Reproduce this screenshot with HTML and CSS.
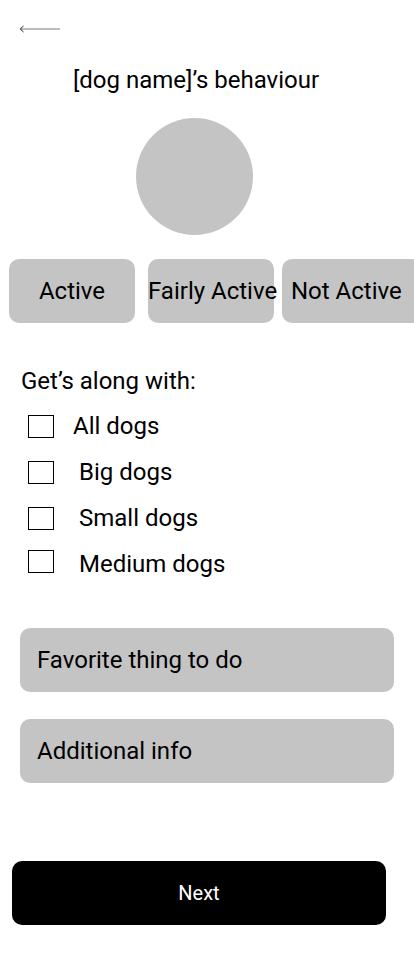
FILE: index.html
```html
<!DOCTYPE html>
<html lang="en">
<head>
<meta charset="utf-8">
<title>Behaviour</title>
<link rel="stylesheet" href="styles.css">
</head>
<body>
<div class="screen">
  <header class="top">
    <svg class="back" width="42" height="8" viewBox="0 0 42 8" aria-hidden="true">
      <line x1="2" y1="4" x2="41" y2="4" stroke="#7a7a7a" stroke-width="1.2"/>
      <path d="M4.5 1 L1.2 4 L4.5 7" fill="none" stroke="#222" stroke-width="1"/>
    </svg>
  </header>
  <h1 class="title">[dog name]’s behaviour</h1>
  <div class="avatar"></div>
  <div class="levels">
    <div class="level l1">Active</div>
    <div class="level l2">Fairly Active</div>
    <div class="level l3">Not Active</div>
  </div>
  <p class="along">Get’s along with:</p>
  <ul class="checks">
    <li class="check c1"><span class="box"></span><span class="lbl">All dogs</span></li>
    <li class="check c2"><span class="box"></span><span class="lbl">Big dogs</span></li>
    <li class="check c3"><span class="box"></span><span class="lbl">Small dogs</span></li>
    <li class="check c4"><span class="box"></span><span class="lbl">Medium dogs</span></li>
  </ul>
  <div class="field f1">Favorite thing to do</div>
  <div class="field f2">Additional info</div>
  <div class="next">Next</div>
</div>
</body>
</html>
```
FILE: styles.css
```css
* { box-sizing: border-box; }
html, body { margin: 0; padding: 0; background: #fff; }
body { font-family: Roboto, "Noto Sans", sans-serif; color: #000; overflow: hidden; }
.screen { width: 414px; height: 974px; display: flex; flex-direction: column; }
.top { height: 58px; padding: 25px 0 0 19px; }
.back { display: block; }
.title { margin: 8px 0 0; font-size: 24px; font-weight: 400; text-align: center; padding-right: 22px; line-height: 28px; height: 28px; }
.avatar { width: 117px; height: 117px; border-radius: 50%; background: #c4c4c4; margin: 24px 0 0 136px; }
.levels { display: flex; margin: 24px 0 0 9px; height: 64px; }
.level { flex: 0 0 126px; min-width: 0; height: 64px; background: #c4c4c4; border-radius: 10px; display: flex; align-items: center; justify-content: center; font-size: 24px; white-space: nowrap; }
.l2 { margin-left: 13px; justify-content: flex-start; }
.l3 { margin-left: 8px; flex-basis: 140px; justify-content: flex-start; padding-left: 9px; }
.along { margin: 44px 0 0 21px; font-size: 24px; line-height: 28px; }
.checks { list-style: none; margin: 8px 0 0 28px; padding: 0; display: flex; flex-direction: column; }
.check { display: flex; align-items: center; height: 46px; font-size: 24px; line-height: 28px; }
.c4 .box { margin-top: -5px; }
.box { width: 26px; height: 23px; border: 1px solid #000; flex: none; }
.lbl { margin-left: 25px; }
.c1 .lbl { margin-left: 19px; }
.field { margin: 0 20px; height: 64px; background: #c4c4c4; border-radius: 10px; display: flex; align-items: center; padding-left: 17px; font-size: 24px; }
.f1 { margin-top: 41px; }
.f2 { margin-top: 27px; }
.next { margin: 78px 28px 0 12px; height: 64px; background: #000; color: #fff; border-radius: 10px; display: flex; align-items: center; justify-content: center; font-size: 20px; }
```
